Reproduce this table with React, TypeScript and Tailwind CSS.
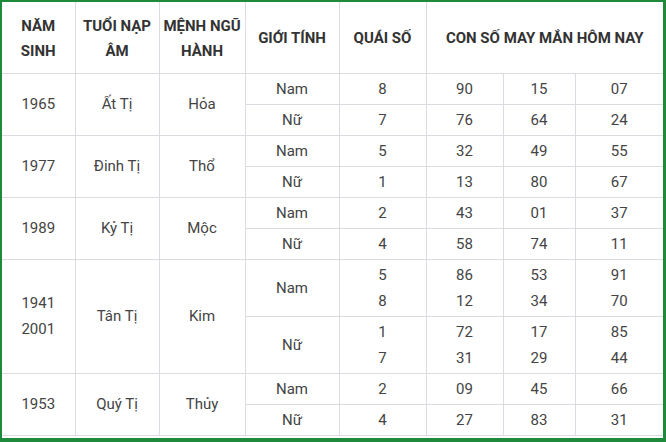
import React from "react";

type Row = {
  years: string[];
  napAm: string;
  menh: string;
  nam: { qs: string[]; nums: string[][] };
  nu: { qs: string[]; nums: string[][] };
};

const rows: Row[] = [
  {
    years: ["1965"],
    napAm: "Ất Tị",
    menh: "Hỏa",
    nam: { qs: ["8"], nums: [["90", "15", "07"]] },
    nu: { qs: ["7"], nums: [["76", "64", "24"]] },
  },
  {
    years: ["1977"],
    napAm: "Đinh Tị",
    menh: "Thổ",
    nam: { qs: ["5"], nums: [["32", "49", "55"]] },
    nu: { qs: ["1"], nums: [["13", "80", "67"]] },
  },
  {
    years: ["1989"],
    napAm: "Kỷ Tị",
    menh: "Mộc",
    nam: { qs: ["2"], nums: [["43", "01", "37"]] },
    nu: { qs: ["4"], nums: [["58", "74", "11"]] },
  },
  {
    years: ["1941", "2001"],
    napAm: "Tân Tị",
    menh: "Kim",
    nam: {
      qs: ["5", "8"],
      nums: [
        ["86", "53", "91"],
        ["12", "34", "70"],
      ],
    },
    nu: {
      qs: ["1", "7"],
      nums: [
        ["72", "17", "85"],
        ["31", "29", "44"],
      ],
    },
  },
  {
    years: ["1953"],
    napAm: "Quý Tị",
    menh: "Thủy",
    nam: { qs: ["2"], nums: [["09", "45", "66"]] },
    nu: { qs: ["4"], nums: [["27", "83", "31"]] },
  },
];

const td = "border border-[#dcdbe2] text-center align-middle p-0";

function Lines({ items }: { items: string[] }) {
  return (
    <>
      {items.map((t, i) => (
        <div key={i}>{t}</div>
      ))}
    </>
  );
}

export default function App() {
  return (
    <div
      className="w-[666px] h-[442px] bg-white border-t-2 border-l-2 border-r-[3px] border-b-4 border-[#1f8a3b] overflow-hidden"
      style={{ fontFamily: "Roboto, 'Noto Sans', sans-serif" }}
    >
      <table className="w-[661px] table-fixed border-collapse text-[15px] leading-[26px] text-[#444]">
        <colgroup>
          <col className="w-[73px]" />
          <col className="w-[84px]" />
          <col className="w-[86px]" />
          <col className="w-[94px]" />
          <col className="w-[87px]" />
          <col className="w-[77px]" />
          <col className="w-[72px]" />
          <col className="w-[88px]" />
        </colgroup>
        <thead>
          <tr className="h-[71px] text-[15px] font-bold leading-[25px] text-[#333]">
            <th className={`${td} border-t-0 border-l-0 pt-[3px]`}>
              NĂM
              <br />
              SINH
            </th>
            <th className={`${td} border-t-0 pt-[3px]`}>
              TUỔI NẠP
              <br />
              ÂM
            </th>
            <th className={`${td} border-t-0 pt-[3px]`}>
              MỆNH NGŨ
              <br />
              HÀNH
            </th>
            <th className={`${td} border-t-0 pt-[3px]`}>GIỚI TÍNH</th>
            <th className={`${td} border-t-0 pt-[3px]`}>QUÁI SỐ</th>
            <th colSpan={3} className={`${td} border-t-0 border-r-0 pt-[3px]`}>
              CON SỐ MAY MẮN HÔM NAY
            </th>
          </tr>
        </thead>
        <tbody>
          {rows.map((r) => {
            const tall = r.years.length > 1;
            const h = tall ? "h-[57px]" : "h-[31px]";
            return (
              <React.Fragment key={r.years[0]}>
                <tr className={h}>
                  <td rowSpan={2} className={`${td} border-l-0`}>
                    <Lines items={r.years} />
                  </td>
                  <td rowSpan={2} className={td}>
                    {r.napAm}
                  </td>
                  <td rowSpan={2} className={td}>
                    {r.menh}
                  </td>
                  <td className={td}>Nam</td>
                  <td className={td}>
                    <Lines items={r.nam.qs} />
                  </td>
                  {[0, 1, 2].map((c) => (
                    <td key={c} className={`${td} ${c === 2 ? "border-r-0" : ""}`}>
                      <Lines items={r.nam.nums.map((n) => n[c])} />
                    </td>
                  ))}
                </tr>
                <tr className={h}>
                  <td className={td}>Nữ</td>
                  <td className={td}>
                    <Lines items={r.nu.qs} />
                  </td>
                  {[0, 1, 2].map((c) => (
                    <td key={c} className={`${td} ${c === 2 ? "border-r-0" : ""}`}>
                      <Lines items={r.nu.nums.map((n) => n[c])} />
                    </td>
                  ))}
                </tr>
              </React.Fragment>
            );
          })}
        </tbody>
      </table>
    </div>
  );
}
